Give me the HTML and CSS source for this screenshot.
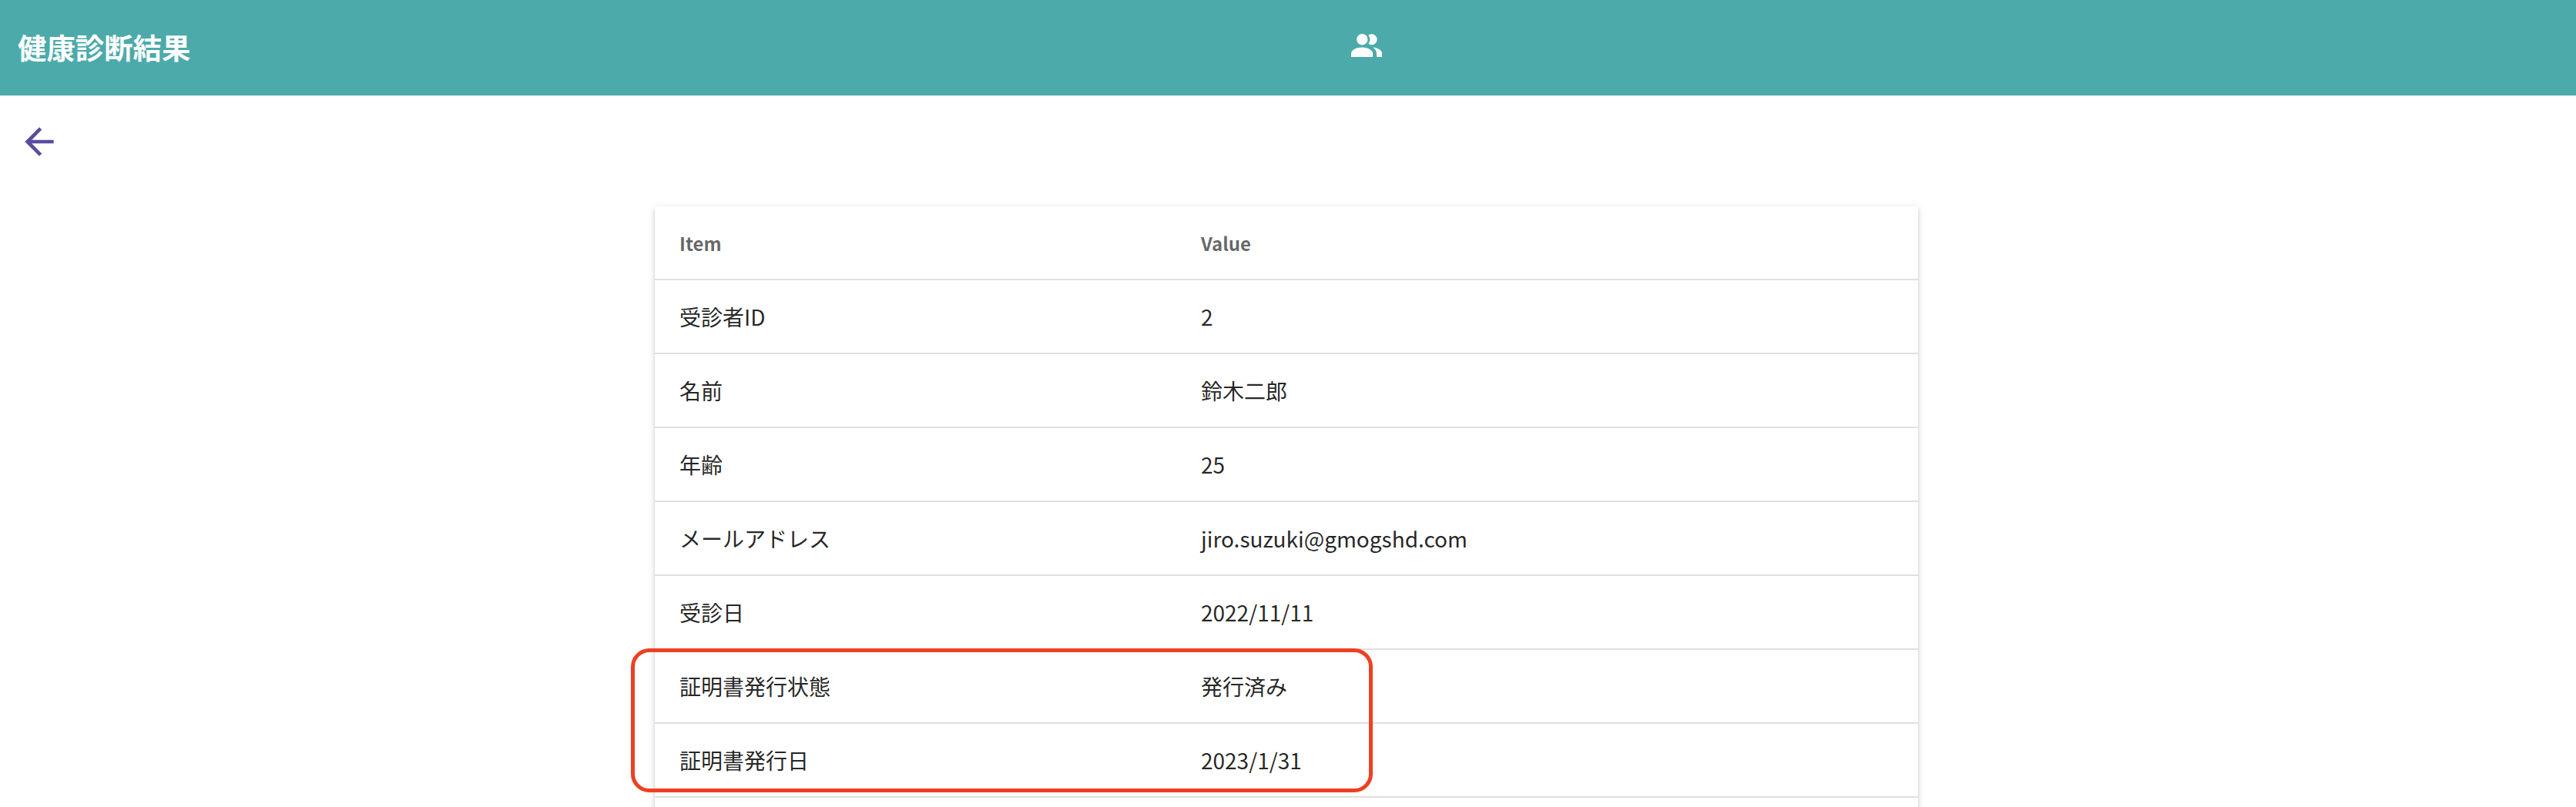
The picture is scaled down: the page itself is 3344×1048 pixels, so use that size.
FILE: index.html
```html
<!DOCTYPE html>
<html lang="ja">
<head>
    <meta charset="UTF-8">
    <meta name="viewport" content="width=device-width, initial-scale=1.0">
    <title>健康診断結果</title>
    <link rel="stylesheet" href="styles.css">
</head>
<body>
    <header class="app-bar">
        <h1 class="app-title">健康診断結果</h1>
        <svg class="people-icon" viewBox="0 0 40 30" aria-label="users">
            <circle cx="14.3" cy="7.2" r="7.2"/>
            <path d="M0 30v-4.5C0 21 7 17.6 14 17.6s14 3.4 14 7.9V30z"/>
            <path d="M22.4 1.6A7 7 0 1 1 22.4 12.8A10 10 0 0 0 22.4 1.6z"/>
            <path d="M28.2 17.6C35 18.2 40 21.4 40 25.5V30h-7v-4.5c0-3-1.900-5.900-4.800-7.900z"/>
        </svg>
    </header>

    <a class="back-link" href="#" aria-label="back">
        <svg class="back-icon" viewBox="0 0 24 24"><path d="M20 11H7.830l5.590-5.590L12 4l-8 8 8 8 1.410-1.410L7.830 13H20v-2z"/></svg>
    </a>

    <main class="table-wrap">
        <table class="result-table">
            <thead>
                <tr><th>Item</th><th>Value</th></tr>
            </thead>
            <tbody>
                <tr><td>受診者ID</td><td>2</td></tr>
                <tr><td>名前</td><td>鈴木二郎</td></tr>
                <tr><td>年齢</td><td>25</td></tr>
                <tr><td>メールアドレス</td><td>jiro.suzuki@gmogshd.com</td></tr>
                <tr><td>受診日</td><td>2022/11/11</td></tr>
                <tr><td>証明書発行状態</td><td>発行済み</td></tr>
                <tr><td>証明書発行日</td><td>2023/1/31</td></tr>
                <tr><td>&nbsp;</td><td></td></tr>
            </tbody>
        </table>
        <div class="highlight-box"></div>
    </main>
</body>
</html>
```

FILE: styles.css
```css
html, body {
    height: 100%;
    overflow: hidden;
}
body {
    margin: 0;
    background: #fff;
    font-family: "Noto Sans CJK JP", "Noto Sans", sans-serif;
    color: rgba(0, 0, 0, 0.87);
}
.app-bar {
    display: flex;
    align-items: center;
    height: 124px;
    padding-left: 23px;
    background-color: #4caaaa;
    color: #fff;
}
.app-title {
    width: 1731px;
    margin: 0;
    font-size: 37.4px;
    font-weight: 700;
    line-height: 1;
}
.people-icon {
    width: 40px;
    height: 30px;
    margin-bottom: 6px;
    fill: #fff;
}
.back-link {
    display: block;
    width: 56px;
    height: 56px;
    margin: 32px 0 0 23px;
}
.back-icon {
    display: block;
    width: 56px;
    height: 56px;
    fill: #5b4d9e;
}
.table-wrap {
    position: relative;
    width: 1640px;
    margin: 56px 0 0 850px;
    box-shadow: 0 4px 2px -2px rgba(0, 0, 0, 0.2), 0 4px 4px rgba(0, 0, 0, 0.14), 0 2px 10px rgba(0, 0, 0, 0.12);
}
.result-table {
    width: 100%;
    border-spacing: 0;
    table-layout: fixed;
}
.result-table th,
.result-table td {
    box-sizing: border-box;
    height: 96px;
    padding: 0 32px;
    border-bottom: 2px solid #e0e0e0;
    text-align: left;
    font-size: 28px;
    font-weight: 400;
}
.result-table th {
    font-size: 24px;
    font-weight: 700;
    color: rgba(0, 0, 0, 0.6);
}
.result-table th:first-child,
.result-table td:first-child {
    width: 677px;
}
.highlight-box {
    position: absolute;
    left: -31px;
    top: 574px;
    width: 963px;
    height: 187px;
    box-sizing: border-box;
    border: 5px solid #ee4023;
    border-radius: 24px;
}
```
